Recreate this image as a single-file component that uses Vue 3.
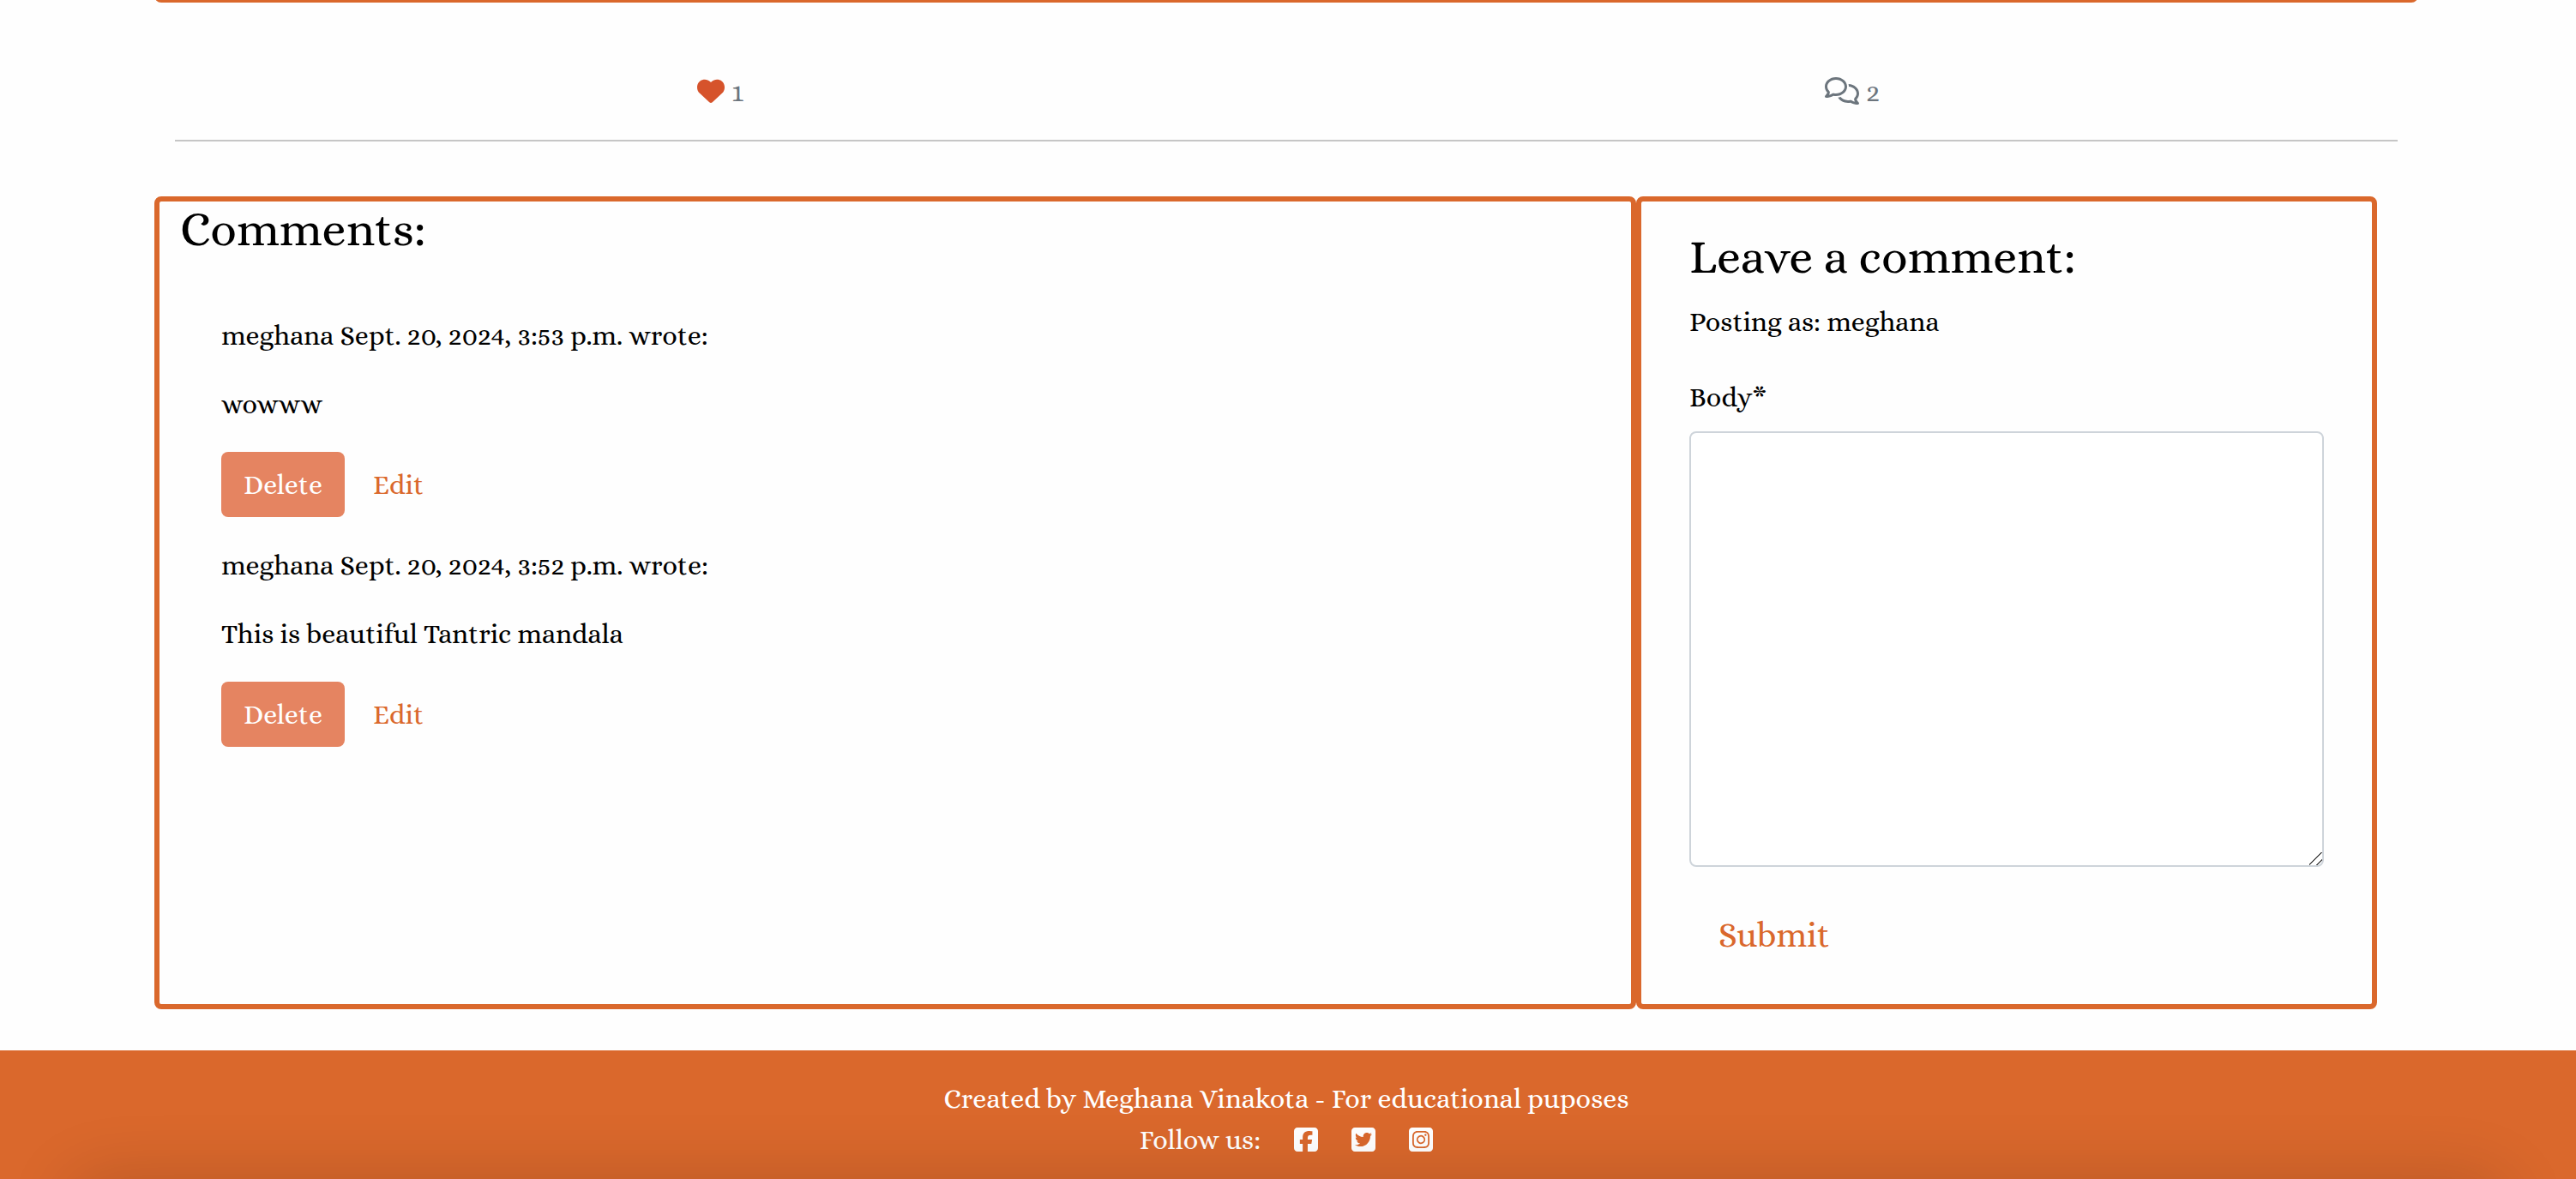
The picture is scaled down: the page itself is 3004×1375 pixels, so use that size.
<script setup>
import { ref } from 'vue'

const likes = ref(1)
const body = ref('')
const comments = ref([
  { id: 2, author: 'meghana', date: 'Sept. 20, 2024, 3:53 p.m.', text: 'wowww' },
  { id: 1, author: 'meghana', date: 'Sept. 20, 2024, 3:52 p.m.', text: 'This is beautiful Tantric mandala' },
])

const socials = [
  {
    name: 'Facebook',
    path: 'M64 32C28.700 32 0 60.700 0 96V416c0 35.300 28.700 64 64 64h98.200V334.200H109.400V256h52.800V222.300c0-87.100 39.400-127.500 125-127.500c16.200 0 44.200 3.200 55.700 6.400V172c-6-.6-16.500-1-29.600-1c-42 0-58.200 15.900-58.200 57.200V256h83.600l-14.400 78.200H255V480H384c35.300 0 64-28.700 64-64V96c0-35.300-28.700-64-64-64H64z',
  },
  {
    name: 'Twitter',
    path: 'M64 32C28.700 32 0 60.700 0 96V416c0 35.300 28.700 64 64 64H384c35.300 0 64-28.700 64-64V96c0-35.300-28.700-64-64-64H64zM351.300 199.300v0c0 86.700-66 186.600-186.600 186.600c-37.200 0-71.700-10.800-100.700-29.400c5.300 .6 10.400 .8 15.800 .8c30.700 0 58.900-10.400 81.400-28c-28.800-.6-53-19.500-61.300-45.500c10.100 1.500 19.200 1.500 29.600-1.200c-30-6.100-52.500-32.500-52.500-64.400v-.8c8.700 4.900 18.900 7.900 29.600 8.300c-9-6-16.400-14.100-21.500-23.600s-7.800-20.200-7.700-31c0-12.200 3.200-23.400 8.900-33.100c32.300 39.800 80.800 65.800 135.200 68.600c-9.300-44.500 24-80.600 64-80.600c18.900 0 35.900 7.900 47.900 20.700c14.800-2.800 29-8.300 41.600-15.800c-4.900 15.200-15.200 28-28.800 36.100c13.200-1.400 26-5.100 37.800-10.200c-8.900 13.100-20.100 24.700-32.900 34c.2 2.800 .2 5.700 .2 8.500z',
  },
  {
    name: 'Instagram',
    path: 'M194.400 211.700a53.300 53.300 0 1 0 59.300 88.700 53.300 53.300 0 1 0 -59.300-88.700zm142.300-68.400c-5.200-5.200-11.500-9.300-18.400-12c-18.100-7.100-57.600-6.800-83.100-6.500c-4.100 0-7.900 .1-11.200 .1c-3.300 0-7.200 0-11.400-.1c-25.500-.3-64.800-.7-82.900 6.500c-6.900 2.700-13.100 6.800-18.400 12s-9.300 11.500-12 18.400c-7.100 18.100-6.700 57.700-6.500 83.200c0 4.100 .1 7.900 .1 11.100s0 7-.1 11.100c-.2 25.500-.6 65.100 6.500 83.200c2.700 6.900 6.800 13.100 12 18.400s11.500 9.300 18.400 12c18.100 7.100 57.600 6.800 83.100 6.500c4.100 0 7.900-.1 11.200-.1c3.300 0 7.200 0 11.400 .1c25.500 .3 64.800 .7 82.900-6.500c6.900-2.700 13.100-6.800 18.400-12s9.300-11.500 12-18.400c7.200-18 6.800-57.400 6.500-83c0-4.200-.1-8.100-.1-11.400s0-7.100 .1-11.400c.3-25.500 .7-64.900-6.500-83c-2.700-6.900-6.800-13.100-12-18.400zm-67.100 44.500A82 82 0 1 1 178.400 324.200a82 82 0 1 1 91.100-136.400zm29.200-1.300c-3.100-2.100-5.600-5.100-7.100-8.600s-1.800-7.300-1.100-11.100s2.600-7.100 5.200-9.800s6.100-4.500 9.800-5.200s7.600-.4 11.100 1.100s6.500 3.900 8.600 7s3.200 6.800 3.200 10.600c0 2.500-.5 5-1.400 7.300s-2.400 4.400-4.100 6.200s-3.900 3.200-6.200 4.200s-4.800 1.500-7.300 1.500c-3.800 0-7.500-1.100-10.600-3.200zM448 96c0-35.300-28.700-64-64-64H64C28.700 32 0 60.700 0 96V416c0 35.300 28.700 64 64 64H384c35.300 0 64-28.700 64-64V96zM357 389c-18.700 18.700-41.400 24.600-67 25.900c-26.400 1.500-105.600 1.500-132 0c-25.600-1.300-48.300-7.200-67-25.900s-24.600-41.400-25.800-67c-1.500-26.400-1.500-105.600 0-132c1.300-25.600 7.100-48.300 25.800-67s41.500-24.600 67-25.800c26.400-1.500 105.600-1.500 132 0c25.600 1.300 48.300 7.100 67 25.800s24.600 41.400 25.800 67c1.500 26.300 1.500 105.400 0 131.900c-1.300 25.600-7.100 48.300-25.800 67z',
  },
]
</script>

<template>
  <div class="page">
    <main>
      <div class="container">
        <div class="post-edge"><div class="post-card"></div></div>

        <section class="stats" aria-label="Post activity">
          <div class="stat">
            <button class="like" type="button" aria-label="Like">
              <svg class="heart" viewBox="0 0 512 512" aria-hidden="true">
                <path d="M47.600 300.400L228.300 469.100c7.500 7 17.400 10.900 27.700 10.900s20.200-3.900 27.700-10.900L464.400 300.400c30.400-28.300 47.600-68 47.600-109.500v-5.800c0-69.900-50.500-129.500-119.400-141C347 36.500 300.600 51.400 268 84L256 96 244 84c-32.600-32.600-79-47.500-124.600-39.900C50.500 55.600 0 115.200 0 185.100v5.800c0 41.500 17.200 81.200 47.600 109.500z" />
              </svg>
            </button>
            <span>{{ likes }}</span>
          </div>
          <div class="stat">
            <svg class="bubbles" viewBox="0 0 640 512" aria-hidden="true">
              <path d="M88.200 309.100c9.800-18.300 6.800-40.800-7.500-55.800C59.400 230.900 48 204 48 176c0-63.500 63.800-128 160-128s160 64.500 160 128s-63.800 128-160 128c-13.100 0-25.800-1.300-37.800-3.600c-10.400-2-21.200-.6-30.700 4.200c-4.100 2.100-8.300 4.100-12.600 6c-16 7.200-32.900 13.500-49.900 18c2.800-4.600 5.400-9.100 7.900-13.600c1.100-1.900 2.200-3.900 3.200-5.900zM208 352c114.900 0 208-78.800 208-176S322.900 0 208 0S0 78.800 0 176c0 41.800 17.200 80.100 45.900 110.300c-.9 1.700-1.900 3.500-2.800 5.100c-10.300 18.400-22.300 36.500-36.600 52.100c-6.600 7-8.300 17.200-4.600 25.900C5.800 378.300 14.400 384 24 384c43 0 86.500-13.300 122.700-29.700c4.800-2.200 9.600-4.500 14.200-6.800c15.100 3 30.900 4.500 47.100 4.500zM432 480c16.200 0 31.900-1.600 47.100-4.500c4.600 2.300 9.400 4.600 14.200 6.800C529.500 498.700 573 512 616 512c9.600 0 18.200-5.700 22-14.500c3.800-8.800 2-19-4.600-25.900c-14.200-15.600-26.200-33.700-36.600-52.100c-.9-1.700-1.900-3.400-2.800-5.100C622.800 384.100 640 345.800 640 304c0-94.400-87.900-171.500-198.200-175.800c4.100 15.200 6.200 31.200 6.200 47.800l0 .6c87.200 6.700 144 67.500 144 127.400c0 28-11.400 54.900-32.700 77.200c-14.300 15-17.300 37.600-7.500 55.800c1.100 2 2.200 4 3.200 5.900c2.500 4.500 5.200 9 7.900 13.600c-17-4.500-33.900-10.700-49.900-18c-4.300-1.900-8.500-3.900-12.600-6c-9.500-4.800-20.300-6.200-30.700-4.200c-12.100 2.400-24.800 3.600-37.800 3.600c-61.700 0-110-26.500-136.800-62.300c-16 5.400-32.800 9.400-50 11.800C279 439.800 350 480 432 480z" />
            </svg>
            <span>{{ comments.length }}</span>
          </div>
        </section>
        <hr class="rule" />

        <div class="panels">
          <section class="card list">
            <h3>Comments:</h3>
            <article v-for="c in comments" :key="c.id" class="comment">
              <p>{{ c.author }} {{ c.date }} wrote:</p>
              <p>{{ c.text }}</p>
              <div class="actions">
                <button class="btn delete" type="button">Delete</button>
                <button class="btn edit" type="button">Edit</button>
              </div>
            </article>
          </section>

          <section class="card compose">
            <h3>Leave a comment:</h3>
            <p>Posting as: meghana</p>
            <form @submit.prevent>
              <label for="id_body">Body*</label>
              <textarea id="id_body" v-model="body" required></textarea>
              <button class="submit" type="submit">Submit</button>
            </form>
          </section>
        </div>
      </div>
    </main>

    <footer class="footer">
      <p>Created by Meghana Vinakota - For educational puposes</p>
      <div class="follow">
        <span>Follow us:</span>
        <a v-for="s in socials" :key="s.name" href="#" :aria-label="s.name">
          <svg viewBox="0 32 448 448" aria-hidden="true"><path :d="s.path" /></svg>
        </a>
      </div>
      <div class="shade"></div>
    </footer>
  </div>
</template>

<style>
body {
  margin: 0;
  background: #fefefe;
}
</style>

<style scoped>
.page {
  display: flex;
  flex-direction: column;
  min-height: 100vh;
  color: #000;
  font-family: Alice, "Liberation Serif", serif;
  font-size: 32px;
  line-height: 48px;
}
.page * {
  box-sizing: border-box;
}
p,
h3 {
  margin: 0;
}
button {
  font: inherit;
  cursor: pointer;
}
main,
.footer {
  padding-right: 4px;
}
.container {
  width: 88%;
  margin: 0 auto;
}
.post-edge {
  display: flex;
  align-items: flex-end;
  height: 3px;
  overflow: hidden;
}
.post-card {
  flex: 1;
  height: 32px;
  border: 6px solid #da682c;
  border-radius: 8px;
}
.stats {
  display: flex;
  padding: 80px 0 32px;
  color: #6c757d;
}
.stat {
  flex: 1;
  display: flex;
  align-items: center;
  justify-content: center;
  gap: 8px;
}
.stat svg {
  margin-bottom: 2px;
}
.like {
  display: flex;
  padding: 0;
  border: 0;
  background: none;
}
.heart {
  width: 32px;
  height: 32px;
  fill: #d6532b;
}
.bubbles {
  width: 40px;
  height: 32px;
  fill: #6c757d;
}
.rule {
  height: 2px;
  margin: 0 24px 64px;
  border: 0;
  background: #c6c6c6;
}
.panels {
  display: grid;
  grid-template-columns: 2fr 1fr;
  margin-right: 48px;
}
.card {
  border: 6px solid #da682c;
  border-radius: 8px;
}
h3 {
  font-size: 56px;
  font-weight: 400;
  line-height: 64px;
}
.list {
  padding: 0 24px;
}
.list h3 {
  margin-bottom: 68px;
}
.comment {
  padding: 0 48px;
}
.comment p {
  margin-bottom: 32px;
}
.actions {
  display: flex;
  gap: 7px;
  margin-bottom: 32px;
}
.btn {
  height: 76px;
  padding: 0 26px;
  border: 0;
  border-radius: 8px;
}
.delete {
  background: #e58461;
  color: #fff;
}
.edit {
  background: none;
  color: #da682c;
}
.compose {
  padding: 32px 56px;
}
.compose h3 {
  margin-bottom: 20px;
}
.compose p {
  margin-bottom: 40px;
}
form {
  display: flex;
  flex-direction: column;
  align-items: flex-start;
}
label {
  margin-bottom: 16px;
}
textarea {
  width: 100%;
  height: 508px;
  padding: 12px 24px;
  border: 2px solid #ced4da;
  border-radius: 8px;
  background: #fff;
  font: inherit;
  resize: vertical;
}
textarea::-webkit-resizer {
  background: linear-gradient(135deg, transparent 46%, #555 46% 53%, transparent 53% 74%, #555 74% 81%, transparent 81%);
}
.submit {
  margin: 36px 0 4px;
  padding: 14px 34px;
  border: 0;
  background: none;
  color: #da682c;
  font-size: 40px;
  line-height: 60px;
}
.footer {
  position: relative;
  flex: 1;
  margin-top: 48px;
  padding-top: 32px;
  overflow: hidden;
  background: #da682c;
  color: #fff;
  text-align: center;
}
.follow {
  display: flex;
  align-items: center;
  justify-content: center;
  gap: 39px;
}
.follow a {
  display: flex;
}
.follow svg {
  width: 28px;
  height: 28px;
  fill: #fff;
}
/* soft shadow rising from the lower window edge */
.shade {
  position: absolute;
  top: 100%;
  left: 80px;
  right: 80px;
  height: 80px;
  border-radius: 40px;
  box-shadow: 0 0 80px rgba(0, 0, 0, 0.16);
}
</style>
